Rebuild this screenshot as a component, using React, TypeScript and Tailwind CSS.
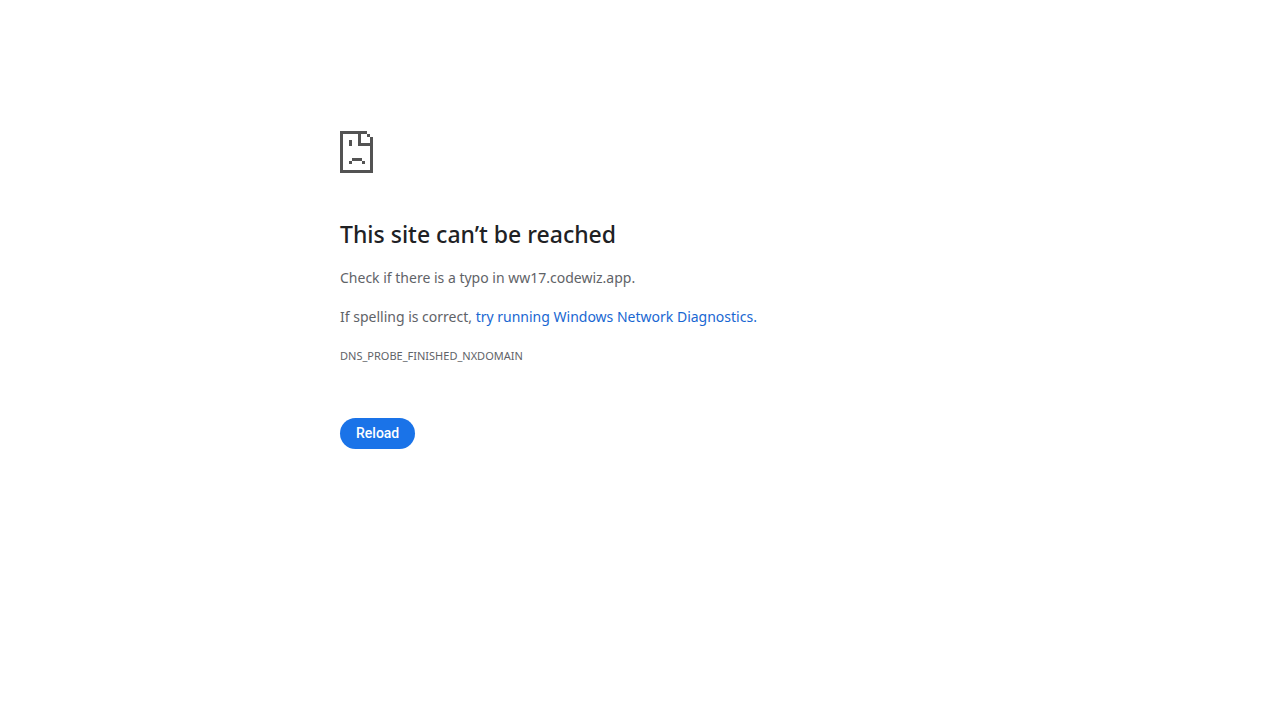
function SadPageIcon() {
  return (
    <svg
      width="33"
      height="42"
      viewBox="0 0 33 42"
      fill="#535353"
      shapeRendering="crispEdges"
      aria-hidden="true"
    >
      {/* Page outline with folded corner */}
      <path d="M0 0h27v3H3v36h27V15H18V3h3v9h9V6h3v36H0z" />
      <path d="M27 3h3v3h-3z" />
      {/* Face */}
      <path d="M9 9h3v6H9z" />
      <path d="M12 27h10v3H12zM9 30h3v3H9zM22 30h3v3h-3z" />
    </svg>
  );
}

export default function App() {
  const reload = () => window.location.reload();

  return (
    <div className="min-h-screen bg-white font-['Segoe_UI','Noto_Sans',sans-serif] text-[#5f6368]">
      <main className="mx-auto max-w-[600px] pt-[131px]">
        <SadPageIcon />

        <h1 className="mt-11 text-[23px] leading-[34px] font-medium text-[#202124]">
          This site can’t be reached
        </h1>

        <p className="mt-[15px] text-sm leading-[23px]">Check if there is a typo in ww17.codewiz.app.</p>

        <p className="mt-4 text-sm leading-[23px]">
          If spelling is correct,{' '}
          <a href="#diagnostics" className="text-[#1967d2]">
            try running Windows Network Diagnostics.
          </a>
        </p>

        <p className="mt-4 text-[11px] leading-[23px]">DNS_PROBE_FINISHED_NXDOMAIN</p>

        <button
          type="button"
          onClick={reload}
          className="mt-[51px] rounded-full bg-[#1a73e8] px-4 py-2 font-['Roboto',sans-serif] text-[14px] leading-[15px] font-medium text-white"
        >
          Reload
        </button>
      </main>
    </div>
  );
}
